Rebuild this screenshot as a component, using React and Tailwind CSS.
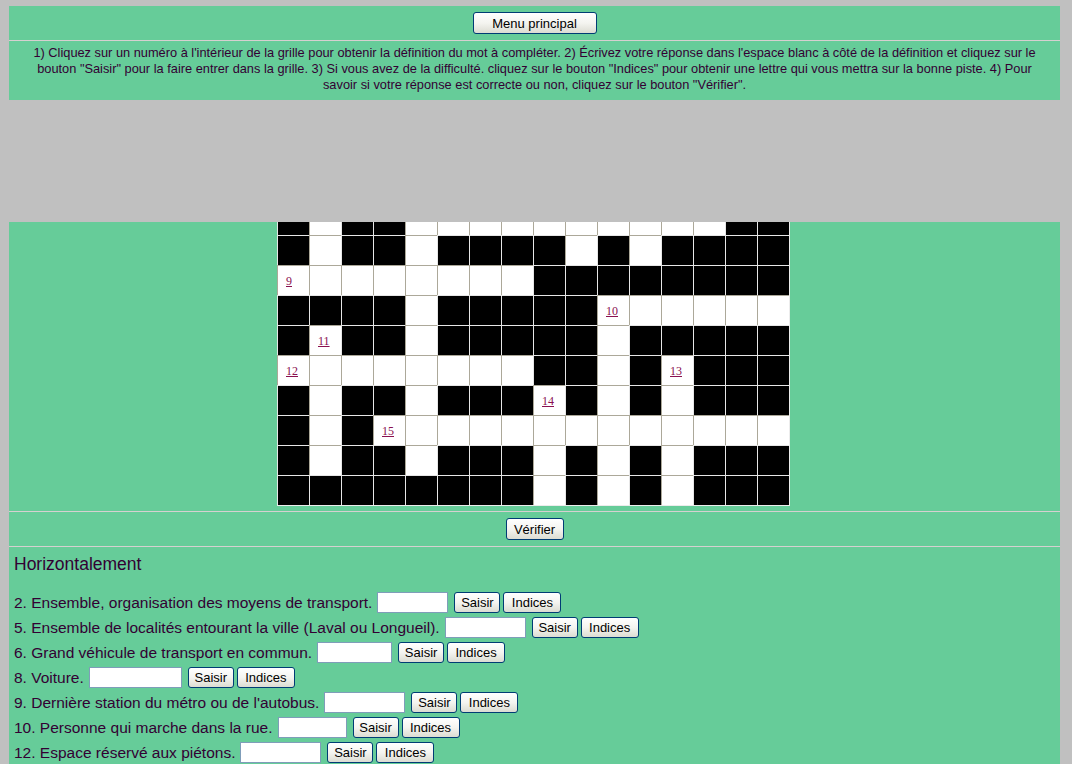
import React from "react";

const GRID = [
  "BWBBWWWWWWWWWWBB",
  "BWBBWBBBBWBWBBBB",
  "WWWWWWWWBBBBBBBB",
  "BBBBWBBBBBWWWWWW",
  "BWBBWBBBBBWBBBBB",
  "WWWWWWWWBBWBWBBB",
  "BWBBWBBBWBWBWBBB",
  "BWBWWWWWWWWWWWWW",
  "BWBBWBBBWBWBWBBB",
  "BBBBBBBBWBWBWBBB",
];

const NUMS = {
  "2-0": "9",
  "3-10": "10",
  "4-1": "11",
  "5-0": "12",
  "5-12": "13",
  "6-8": "14",
  "7-3": "15",
};

const CLUES = [
  { t: "2. Ensemble, organisation des moyens de transport.", w: 71 },
  { t: "5. Ensemble de localités entourant la ville (Laval ou Longueil).", w: 81 },
  { t: "6. Grand véhicule de transport en commun.", w: 75 },
  { t: "8. Voiture.", w: 93 },
  { t: "9. Dernière station du métro ou de l'autobus.", w: 81 },
  { t: "10. Personne qui marche dans la rue.", w: 69 },
  { t: "12. Espace réservé aux piétons.", w: 81 },
];

function Btn({ children, className }) {
  return (
    <button
      type="button"
      className={
        "shrink-0 rounded-[3px] border border-[#003c74] bg-linear-to-b from-[#ffffff] via-[#f4f4f0] to-[#dcdcd2] text-[13px] leading-none text-black font-['Liberation_Sans',Arial,sans-serif] " +
        className
      }
    >
      {children}
    </button>
  );
}

function Cell({ black, num }) {
  if (black) {
    return <div className="h-[30px] w-[32px] border-l border-t border-[#e6e6e6] bg-black" />;
  }
  return (
    <div className="h-[30px] w-[32px] border-l border-t border-[#aca899] bg-white pl-[8px] pt-[2px]">
      {num && (
        <span className="text-[12px] leading-[14px] text-[#8a1050] underline font-['Liberation_Serif','Times_New_Roman',serif]">
          {num}
        </span>
      )}
    </div>
  );
}

export default function App() {
  return (
    <div className="min-h-screen bg-[#c0c0c0] pt-[6px] pb-[40px] font-['Liberation_Sans',Arial,sans-serif] text-[#330033]">
      {/* Top panel */}
      <div className="ml-[9px] w-[1051px] bg-[#66cc99]">
        <div className="flex justify-center py-[6px]">
          <Btn className="h-[22px] w-[124px]">Menu principal</Btn>
        </div>
        <div className="border-t border-[#d6d0d0] px-[4px] pt-[4px] pb-[7px] text-center text-[12.8px] leading-[16px] whitespace-nowrap">
          1) Cliquez sur un numéro à l'intérieur de la grille pour obtenir la définition du mot à compléter. 2) Écrivez votre réponse dans l'espace blanc à côté de la définition et cliquez sur le
          <br />
          bouton "Saisir" pour la faire entrer dans la grille. 3) Si vous avez de la difficulté. cliquez sur le bouton "Indices" pour obtenir une lettre qui vous mettra sur la bonne piste. 4) Pour
          <br />
          savoir si votre réponse est correcte ou non, cliquez sur le bouton "Vérifier".
        </div>
      </div>

      {/* Gap */}
      <div className="h-[122px]" />

      {/* Main panel */}
      <div className="ml-[9px] w-[1051px] bg-[#66cc99]">
        <div className="flex h-[289px] items-start justify-center overflow-hidden">
          <div className="mt-[-17px] mr-[2px] grid grid-cols-[repeat(16,32px)] border-r border-b border-[#ececec]">
            {GRID.map((row, r) =>
              row.split("").map((c, k) => (
                <Cell key={r + "-" + k} black={c === "B"} num={NUMS[r + "-" + k]} />
              ))
            )}
          </div>
        </div>
        <div className="flex justify-center border-t border-[#d6d0d0] py-[6px]">
          <Btn className="h-[22px] w-[58px]">Vérifier</Btn>
        </div>
        <div className="border-t border-[#d6d0d0] pl-[5px] pt-[7px] pb-[30px]">
          <div className="text-[17.5px] leading-[20px]">Horizontalement</div>
          <div className="mt-[16px] flex flex-col">
            {CLUES.map((c) => (
              <div key={c.t} className="flex h-[25px] items-center whitespace-nowrap text-[15.5px] leading-[18px]">
                <span>{c.t}</span>
                <input
                  type="text"
                  className="ml-[5px] h-[21px] shrink-0 border border-[#7f9db9] bg-white outline-none"
                  style={{ width: c.w + "px" }}
                />
                <Btn className="ml-[6px] h-[21px] w-[46px]">Saisir</Btn>
                <Btn className="ml-[3px] h-[21px] w-[58px]">Indices</Btn>
              </div>
            ))}
          </div>
        </div>
      </div>
    </div>
  );
}
